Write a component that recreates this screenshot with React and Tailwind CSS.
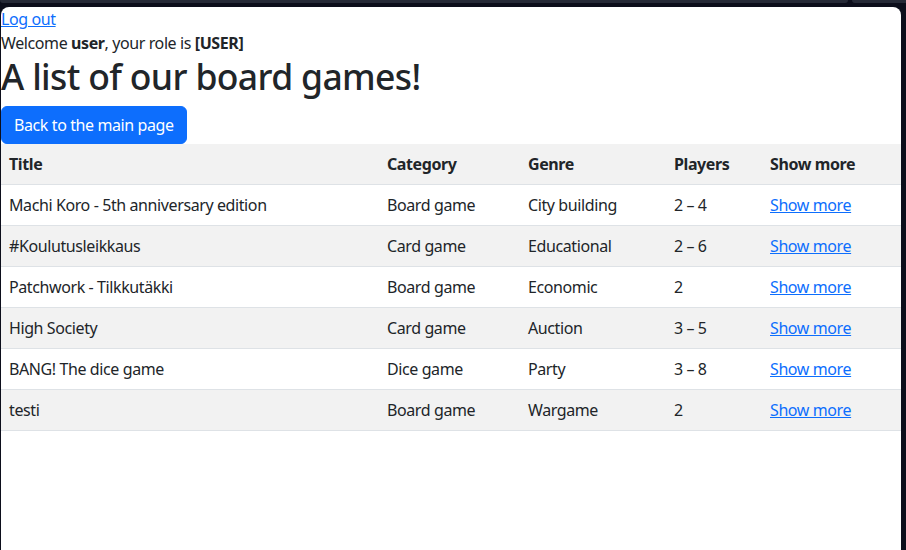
const games = [
  { title: "Machi Koro - 5th anniversary edition", category: "Board game", genre: "City building", players: "2 – 4" },
  { title: "#Koulutusleikkaus", category: "Card game", genre: "Educational", players: "2 – 6" },
  { title: "Patchwork - Tilkkutäkki", category: "Board game", genre: "Economic", players: "2" },
  { title: "High Society", category: "Card game", genre: "Auction", players: "3 – 5" },
  { title: "BANG! The dice game", category: "Dice game", genre: "Party", players: "3 – 8" },
  { title: "testi", category: "Board game", genre: "Wargame", players: "2" },
];

function App() {
  return (
    <div className="h-[550px] bg-[#0c0e1b] flex flex-col overflow-hidden">
      {/* Browser chrome strip */}
      <div className="flex h-[7px] gap-1">
        <div className="h-[3px] w-[848px] bg-[#262a37] rounded-b-md" />
        <div className="h-[3px] flex-1 bg-[#262a37] rounded-bl-md" />
      </div>

      {/* Page */}
      <div className="flex-1 ml-[1px] mr-[5px] bg-white rounded-t-lg overflow-hidden text-[#212529] text-base leading-6 tracking-[-0.4px] font-['Noto_Sans',sans-serif]">
        <a href="#" className="text-[#0d6efd] underline">Log out</a>
        <p>
          Welcome <strong className="font-bold">user</strong>, your role is <strong className="font-bold">[USER]</strong>
        </p>
        <h1 className="text-[35.5px] leading-[1.2] font-medium tracking-[-0.65px] mb-2">A list of our board games!</h1>
        <button className="bg-[#0d6efd] text-white rounded-md px-3 py-1.5 border border-[#0d6efd] leading-6">
          Back to the main page
        </button>

        <table className="w-full border-collapse table-fixed">
          <thead>
            <tr className="bg-[#f2f2f2] border-b border-[#dee2e6]">
              <th className="w-[378px] text-left font-bold p-2">Title</th>
              <th className="w-[141px] text-left font-bold p-2">Category</th>
              <th className="w-[146px] text-left font-bold p-2">Genre</th>
              <th className="w-[96px] text-left font-bold p-2">Players</th>
              <th className="text-left font-bold p-2">Show more</th>
            </tr>
          </thead>
          <tbody>
            {games.map((g, i) => (
              <tr key={g.title} className={`border-b border-[#dee2e6] ${i % 2 === 1 ? "bg-[#f2f2f2]" : "bg-white"}`}>
                <td className="p-2">{g.title}</td>
                <td className="p-2">{g.category}</td>
                <td className="p-2">{g.genre}</td>
                <td className="p-2">{g.players}</td>
                <td className="p-2">
                  <a href="#" className="text-[#0d6efd] underline">Show more</a>
                </td>
              </tr>
            ))}
          </tbody>
        </table>
      </div>
    </div>
  );
}

export default App;
